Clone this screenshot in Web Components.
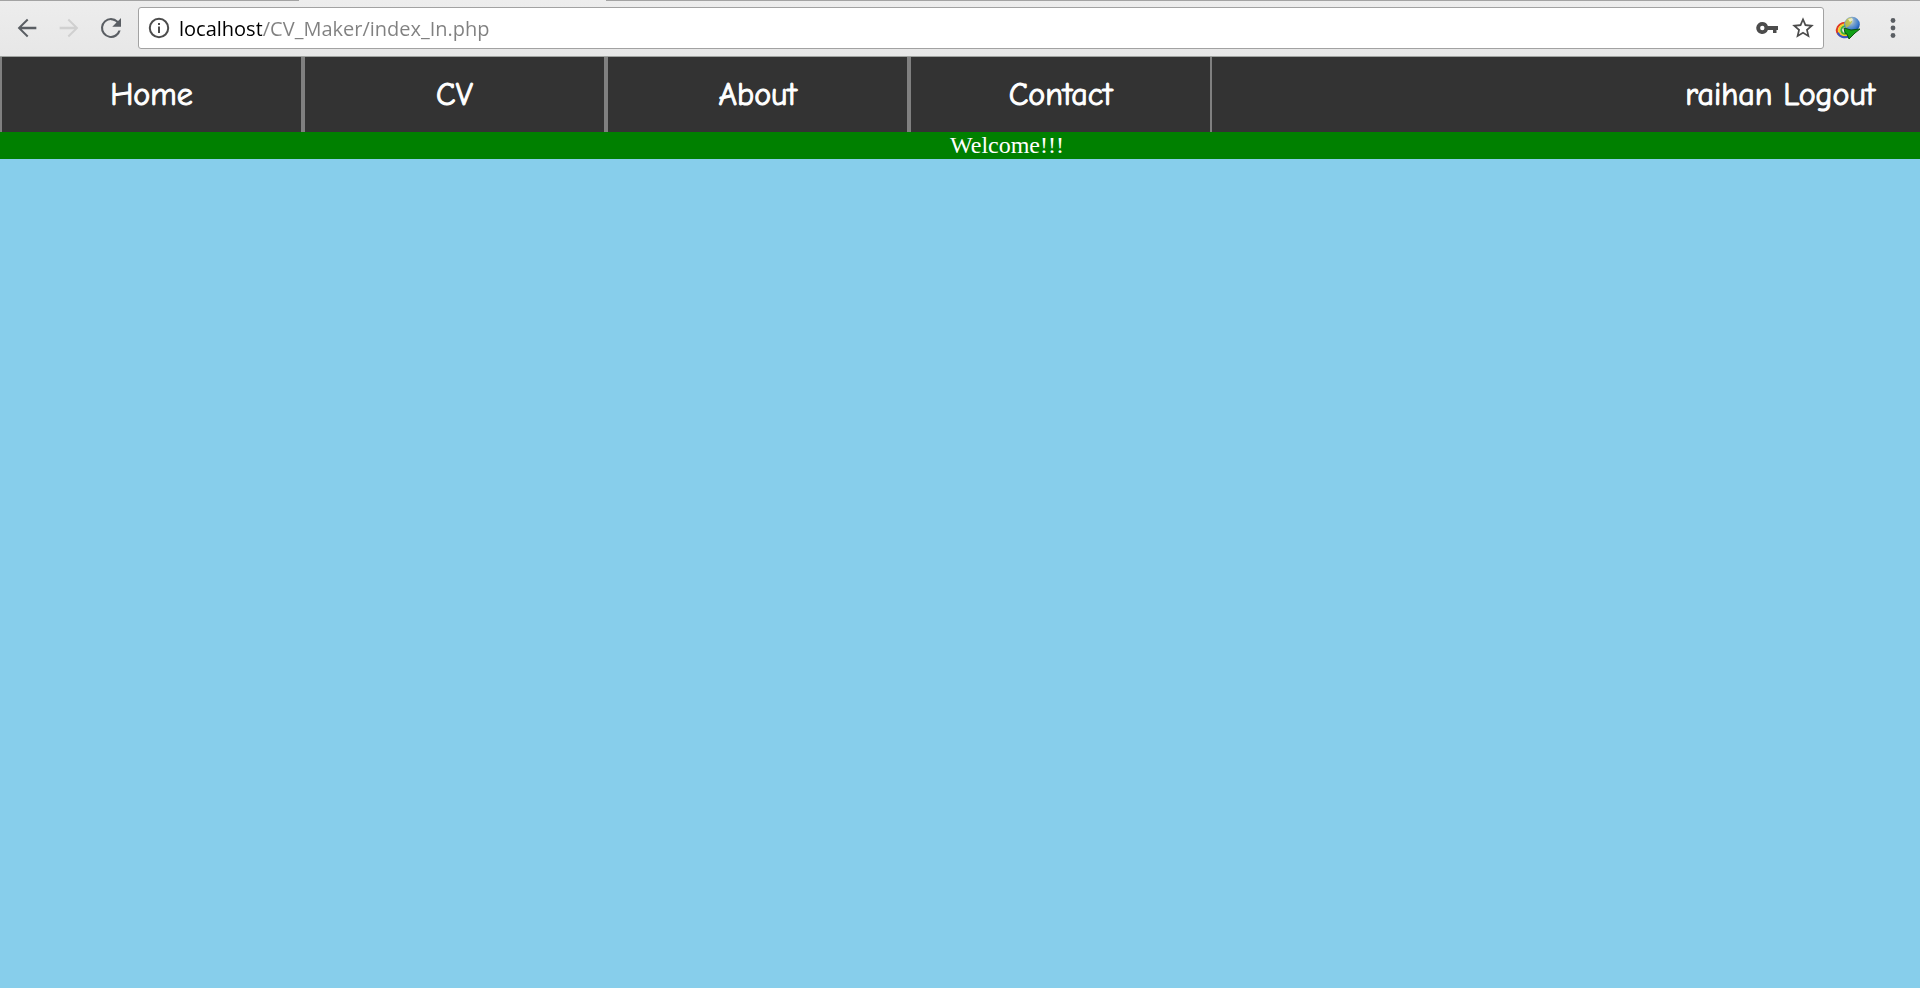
<!DOCTYPE html>
<html lang="en">
<head>
<meta charset="utf-8">
<title>CV Maker</title>
<style>
  html, body { margin: 0; min-height: 100%; }
  body { background: #87ceeb; font-family: "Liberation Serif", serif; }
</style>
</head>
<body>
<browser-bar>
  <tool-button label="Back">
    <svg width="28" height="28" viewBox="0 0 24 24" fill="#5a5e63"><path d="M20 11H7.500l5.700-5.600L12 4l-8 8 8 8 1.200-1.400L7.500 13H20z"/></svg>
  </tool-button>
  <tool-button label="Forward">
    <svg width="28" height="28" viewBox="0 0 24 24" fill="#d0d0d0"><path d="M4 11h12.500l-5.700-5.600L12 4l8 8-8 8-1.200-1.400 5.700-5.600H4z"/></svg>
  </tool-button>
  <tool-button label="Reload">
    <svg width="30" height="30" viewBox="0 0 24 24" fill="#5a5e63"><path d="M17.65 6.35A7.96 7.96 0 0 0 12 4a8 8 0 1 0 7.73 10h-1.8A6.3 6.3 0 1 1 12 5.7c1.7 0 3.25.75 4.4 1.85L13 11h7V4z"/></svg>
  </tool-button>
  <address-box slot="address"></address-box>
  <tool-button slot="end" label="Download manager" style="--w:48px">
    <svg width="26" height="24" viewBox="0 0 26 24">
      <defs><radialGradient id="g" cx=".38" cy=".28" r=".75"><stop offset="0" stop-color="#e8ecd0"/><stop offset=".35" stop-color="#86a8c8"/><stop offset=".7" stop-color="#3f7fd0"/><stop offset="1" stop-color="#164aa0"/></radialGradient></defs>
      <g fill="none" stroke-width="2" transform="rotate(-20 10 13)">
        <ellipse cx="9.500" cy="13.500" rx="8" ry="6.800" stroke="#e03a22"/>
        <ellipse cx="10" cy="13.700" rx="6.300" ry="5.300" stroke="#f2d021"/>
        <ellipse cx="10.500" cy="14" rx="4.700" ry="3.900" stroke="#39b03a"/>
        <path d="M2 14c0 5 5 8 10 7" stroke="#3657c8"/>
      </g>
      <circle cx="17" cy="8.500" r="7.800" fill="url(#g)"/>
      <path d="M10 7c1-4 4-6 7-5l0 4-3 4-3 2z" fill="#c3c23c" opacity=".85"/>
      <path d="M13 3l4-1 1 2-3 2z" fill="#f4f4e0" opacity=".8"/>
      <path d="M9 12l7 2 9-1-5 4-2 2-4 4-2-5-2-1z" fill="#12a016" stroke="#064a08" stroke-width=".9"/>
    </svg>
  </tool-button>
  <tool-button slot="end" label="Menu">
    <svg width="6" height="22" viewBox="0 0 6 22" fill="#5a5e63"><circle cx="3" cy="3.500" r="2.400"/><circle cx="3" cy="11" r="2.400"/><circle cx="3" cy="18.500" r="2.400"/></svg>
  </tool-button>
</browser-bar>
<site-nav>
  <nav-item href="#home">Home</nav-item>
  <nav-item href="#cv">CV</nav-item>
  <nav-item href="#about">About</nav-item>
  <nav-item href="#contact">Contact</nav-item>
  <user-menu slot="user" name="raihan"></user-menu>
</site-nav>
<welcome-banner>Welcome!!!</welcome-banner>

<script>
class Base extends HTMLElement {
  render(html) { this.attachShadow({ mode: "open" }).innerHTML = html; }
}

customElements.define("tool-button", class extends Base {
  connectedCallback() {
    if (this.shadowRoot) return;
    this.render(`<style>
      :host { display: flex; flex: none; width: var(--w, 42px); }
      button { flex: 1; display: flex; align-items: center; justify-content: center; margin: 0; padding: 0; border: 0; background: none; }
    </style><button type="button"><slot></slot></button>`);
    this.shadowRoot.querySelector("button").setAttribute("aria-label", this.getAttribute("label"));
  }
});

customElements.define("address-box", class extends Base {
  connectedCallback() {
    if (this.shadowRoot) return;
    this.render(`<style>
      :host { display: flex; flex: 1; min-width: 0; box-sizing: border-box; height: 42px; padding-right: 2px;
        background: #fff; border: 1px solid #a2a2a2; border-radius: 3px; }
      tool-button { --w: 36px; }
      tool-button.info { --w: 40px; }
      input { flex: 1; min-width: 0; margin: 0; padding: 0; border: 0; outline: 0;
        font: 20px "Segoe UI", "Open Sans", sans-serif; color: #808080;
        background: linear-gradient(90deg, #000 83px, #808080 83px);
        -webkit-background-clip: text; background-clip: text; -webkit-text-fill-color: transparent; }
    </style>
    <tool-button class="info" label="Site information">
      <svg width="22" height="22" viewBox="0 0 22 22"><circle cx="11" cy="11" r="9.200" fill="none" stroke="#4c4c4c" stroke-width="2"/><path d="M10 6h2v2h-2zM10 9.500h2v6.500h-2z" fill="#4c4c4c"/></svg>
    </tool-button>
    <input type="text" aria-label="Address" spellcheck="false" value="localhost/CV_Maker/index_In.php">
    <tool-button label="Saved passwords">
      <svg width="22" height="14" viewBox="0 0 22 14" fill="#4c4c4c"><path fill-rule="evenodd" d="M6.300 1a6 6 0 0 1 5.600 4H22v4h-1.500v3H17V9h-5.100A6 6 0 1 1 6.300 1zm0 3.800a2.200 2.200 0 1 0 0 4.400 2.200 2.200 0 0 0 0-4.400z"/></svg>
    </tool-button>
    <tool-button label="Bookmark this page">
      <svg width="26" height="26" viewBox="0 0 24 24" fill="#4c4c4c"><path d="M22 9.240l-7.190-.62L12 2 9.190 8.630 2 9.240l5.460 4.730L5.820 21 12 17.270 18.180 21l-1.630-7.030zM12 15.400l-3.760 2.270 1-4.280-3.320-2.880 4.380-.38L12 6.100l1.710 4.040 4.380.38-3.320 2.880 1 4.280z"/></svg>
    </tool-button>`);
  }
});

customElements.define("browser-bar", class extends Base {
  connectedCallback() {
    if (this.shadowRoot) return;
    this.render(`<style>
      :host { display: block; background: linear-gradient(#ededed, #e7e7e7); border-bottom: 1px solid #a0a3a0; }
      .tabs { display: grid; grid-template-columns: 299px 307px 1fr; height: 1px; }
      .tabs i:nth-child(odd) { background: #a3a3a3; }
      .row { display: flex; padding: 6px 6px 7px; }
      .left { display: flex; margin-right: 6px; }
      .right { display: flex; }
    </style>
    <div class="tabs"><i></i><i></i><i></i></div>
    <div class="row"><div class="left"><slot></slot></div><slot name="address"></slot><div class="right"><slot name="end"></slot></div></div>`);
  }
});

customElements.define("nav-item", class extends Base {
  connectedCallback() {
    if (this.shadowRoot) return;
    this.render(`<style>
      :host { display: flex; flex: 0 1 303px; box-sizing: border-box; border: solid #808080; border-width: 0 2px; }
      a { flex: 1; text-align: center; color: #fff; text-decoration: none; }
    </style><a><slot></slot></a>`);
    this.shadowRoot.querySelector("a").href = this.getAttribute("href");
  }
});

customElements.define("user-menu", class extends Base {
  connectedCallback() {
    if (this.shadowRoot) return;
    this.render(`<style>
      :host { display: block; white-space: nowrap; color: #fff; }
      a { color: inherit; text-decoration: none; }
    </style><span></span> <a href="#logout">Logout</a>`);
    this.shadowRoot.querySelector("span").textContent = this.getAttribute("name");
  }
});

customElements.define("site-nav", class extends Base {
  connectedCallback() {
    if (this.shadowRoot) return;
    this.render(`<style>
      :host { display: block; background: #333; font: 32px/75px "Comic Sans MS", "Comic Neue", Lato, sans-serif;
        -webkit-text-stroke: 1px #fff; }
      nav { display: flex; }
      .user { margin-left: auto; padding-right: 45px; }
    </style><nav><slot></slot><div class="user"><slot name="user"></slot></div></nav>`);
  }
});

customElements.define("welcome-banner", class extends Base {
  connectedCallback() {
    if (this.shadowRoot) return;
    this.render(`<style>
      :host { display: block; padding-left: 94px; background: #008000; color: #fff; text-align: center;
        font: 24px/27px "Times New Roman", "Liberation Serif", serif; }
    </style><slot></slot>`);
  }
});
</script>
</body>
</html>
